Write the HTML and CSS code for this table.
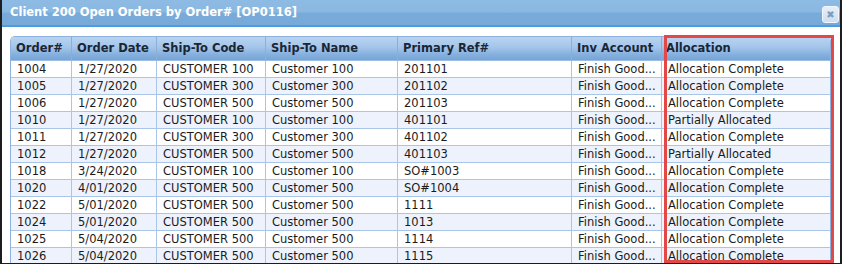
FILE: index.html
```html
<!DOCTYPE html>
<html>
<head>
<meta charset="utf-8">
<link rel="stylesheet" href="styles.css">
</head>
<body>
<div class="dialog">
  <div class="titlebar">
    <span class="title">Client 200 Open Orders by Order# [OP0116]</span>
    <span class="close">&#x2716;</span>
  </div>
  <div class="content">
    <div class="grid">
      <table>
        <colgroup>
          <col class="c1"><col class="c2"><col class="c3"><col class="c4"><col class="c5"><col class="c6"><col class="c7">
        </colgroup>
        <thead>
          <tr><th>Order#</th><th>Order Date</th><th>Ship-To Code</th><th>Ship-To Name</th><th>Primary Ref#</th><th>Inv Account</th><th>Allocation</th></tr>
        </thead>
        <tbody>
          <tr><td>1004</td><td>1/27/2020</td><td>CUSTOMER 100</td><td>Customer 100</td><td>201101</td><td>Finish Good...</td><td>Allocation Complete</td></tr>
          <tr><td>1005</td><td>1/27/2020</td><td>CUSTOMER 300</td><td>Customer 300</td><td>201102</td><td>Finish Good...</td><td>Allocation Complete</td></tr>
          <tr><td>1006</td><td>1/27/2020</td><td>CUSTOMER 500</td><td>Customer 500</td><td>201103</td><td>Finish Good...</td><td>Allocation Complete</td></tr>
          <tr><td>1010</td><td>1/27/2020</td><td>CUSTOMER 100</td><td>Customer 100</td><td>401101</td><td>Finish Good...</td><td>Partially Allocated</td></tr>
          <tr><td>1011</td><td>1/27/2020</td><td>CUSTOMER 300</td><td>Customer 300</td><td>401102</td><td>Finish Good...</td><td>Allocation Complete</td></tr>
          <tr><td>1012</td><td>1/27/2020</td><td>CUSTOMER 500</td><td>Customer 500</td><td>401103</td><td>Finish Good...</td><td>Partially Allocated</td></tr>
          <tr><td>1018</td><td>3/24/2020</td><td>CUSTOMER 100</td><td>Customer 100</td><td>SO#1003</td><td>Finish Good...</td><td>Allocation Complete</td></tr>
          <tr><td>1020</td><td>4/01/2020</td><td>CUSTOMER 500</td><td>Customer 500</td><td>SO#1004</td><td>Finish Good...</td><td>Allocation Complete</td></tr>
          <tr><td>1022</td><td>5/01/2020</td><td>CUSTOMER 500</td><td>Customer 500</td><td>1111</td><td>Finish Good...</td><td>Allocation Complete</td></tr>
          <tr><td>1024</td><td>5/01/2020</td><td>CUSTOMER 500</td><td>Customer 500</td><td>1013</td><td>Finish Good...</td><td>Allocation Complete</td></tr>
          <tr><td>1025</td><td>5/04/2020</td><td>CUSTOMER 500</td><td>Customer 500</td><td>1114</td><td>Finish Good...</td><td>Allocation Complete</td></tr>
          <tr><td>1026</td><td>5/04/2020</td><td>CUSTOMER 500</td><td>Customer 500</td><td>1115</td><td>Finish Good...</td><td>Allocation Complete</td></tr>
        </tbody>
      </table>
    </div>
    <div class="highlight"></div>
  </div>
</div>
</body>
</html>
```
FILE: styles.css
```css
html, body {
  margin: 0;
  padding: 0;
  background: #ffffff;
}
body {
  font-family: "DejaVu Sans", Verdana, sans-serif;
}
.dialog {
  position: relative;
  width: 842px;
  height: 264px;
  box-sizing: border-box;
  border-left: 2px solid #1d1d1d;
  border-right: 2px solid #1d1d1d;
  border-bottom: 1px solid #1d1d1d;
  overflow: hidden;
  background: #ffffff;
}
.titlebar {
  height: 25px;
  border-bottom: 2px solid #4d9be0;
  background: linear-gradient(#8ebbe3 0, #8ab8e1 48%, #79abda 52%, #77a9d9 100%);
  display: flex;
  align-items: center;
  justify-content: space-between;
  padding: 0 1px 0 8px;
}
.title {
  color: #ffffff;
  font-weight: bold;
  font-size: 11.5px;
  padding-bottom: 1px;
}
.close {
  width: 17px;
  height: 17px;
  box-sizing: border-box;
  border: 1px solid #f2f7fd;
  border-radius: 3px;
  background: linear-gradient(#e6eff9, #cddff1);
  color: #7b9cc2;
  font-size: 10px;
  font-weight: bold;
  line-height: 15px;
  text-align: center;
  margin-top: 3px;
}
.content {
  padding: 9px 8px 0 8px;
}
.grid {
  width: 821px;
  box-sizing: border-box;
  border: 1px solid #8eb2dd;
  border-bottom: none;
  border-radius: 5px 5px 0 0;
  overflow: hidden;
}
table {
  border-collapse: separate;
  border-spacing: 0;
  table-layout: fixed;
  width: 819px;
}
.c1 { width: 61px; }
.c2 { width: 85px; }
.c3 { width: 109px; }
.c4 { width: 132px; }
.c5 { width: 174px; }
.c6 { width: 90px; }
.c7 { width: 168px; }
th {
  height: 24px;
  box-sizing: border-box;
  padding: 0 3px 1px 5px;
  text-align: left;
  font-size: 11.5px;
  font-weight: bold;
  color: #1a2636;
  background: linear-gradient(#b9d4f1 0, #a4c5ea 45%, #86b1df 75%, #74a4d6 100%);
  border-right: 1px solid #8bafd9;
  border-bottom: 1px solid #9dbde4;
  white-space: nowrap;
  overflow: hidden;
}
th:last-child { border-right: none; padding-left: 4px; }
td {
  height: 17px;
  box-sizing: border-box;
  padding: 1px 3px 0 6px;
  font-size: 11.5px;
  color: #1b1b1b;
  border-right: 1px solid #a9c6e8;
  border-bottom: 1px solid #a9c6e8;
  white-space: nowrap;
  overflow: hidden;
  line-height: 15px;
}
td:last-child { border-right: none; }
tbody tr:nth-child(even) td { background: #edf2fc; }
tbody tr:nth-child(odd) td { background: #ffffff; }
.highlight {
  position: absolute;
  left: 662px;
  top: 35px;
  width: 170px;
  height: 228px;
  box-sizing: border-box;
  border: 3px solid #e34848;
  pointer-events: none;
}
```
